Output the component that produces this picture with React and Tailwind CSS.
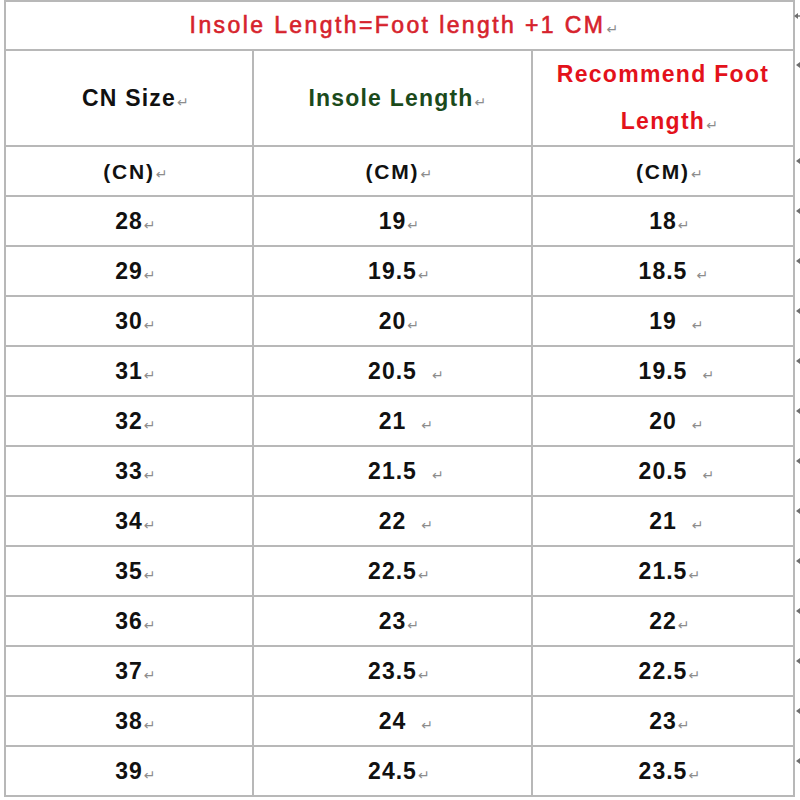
import React from "react";

const rows = [
  ["28", "", "19", "", "18", ""],
  ["29", "", "19.5", "", "18.5", " "],
  ["30", "", "20", "", "19", "  "],
  ["31", "", "20.5", "  ", "19.5", "  "],
  ["32", "", "21", "  ", "20", "  "],
  ["33", "", "21.5", "  ", "20.5", "  "],
  ["34", "", "22", "  ", "21", "  "],
  ["35", "", "22.5", "", "21.5", ""],
  ["36", "", "23", "", "22", ""],
  ["37", "", "23.5", "", "22.5", ""],
  ["38", "", "24", "  ", "23", ""],
  ["39", "", "24.5", "", "23.5", ""],
];

const gapClass = {
  "": "ml-[1px]",
  " ": "ml-[9px]",
  "  ": "ml-[15px]",
};

// word-style paragraph mark, not counted in centering
const Mark = ({ gap = "" }) => (
  <span
    className={`absolute left-full bottom-[1px] ${gapClass[gap]} text-[14px] leading-none font-normal tracking-normal text-[#8c8c8c] font-['DejaVu_Sans',sans-serif] [-webkit-text-stroke:0px]`}
  >
    ↵
  </span>
);

const RowMark = () => (
  <svg
    className="absolute -right-[7px] top-[10px]"
    width="6"
    height="8"
    viewBox="0 0 6 8"
  >
    <polygon points="0,4 4,1 4,7" fill="#6e6e6e" />
    <line x1="3" y1="4" x2="6" y2="4" stroke="#6e6e6e" strokeWidth="1.4" />
  </svg>
);

const Cell = ({ w, children }) => (
  <div
    className={`${w} h-full flex items-center justify-center border-r-2 border-[#b8b8b8]`}
  >
    {children}
  </div>
);

const Txt = ({ children, gap = "" }) => (
  <span className="relative inline-block leading-none">
    {children}
    <Mark gap={gap} />
  </span>
);

export default function App() {
  return (
    <div className="w-[800px] h-[800px] bg-white overflow-hidden font-['Liberation_Sans',Arial,sans-serif]">
      <div className="ml-[4px] w-[791px] border-t-2 border-l-2 border-[#b8b8b8]">
        {/* title */}
        <div className="relative h-[49px] flex items-center justify-center border-r-2 border-b-2 border-[#b8b8b8]">
          <span className="relative inline-block leading-none text-[23px] tracking-[2.4px] text-[#d6222c] [-webkit-text-stroke:0.6px_#d6222c] -ml-[4px]">
            Insole Length=Foot length +1 CM
            <Mark />
          </span>
          <RowMark />
        </div>

        {/* column headers */}
        <div className="relative h-[96px] flex border-b-2 border-[#b8b8b8] font-bold text-[23px] tracking-[1.2px]">
          <Cell w="w-[248px]">
            <span className="text-[#111]">
              <Txt>CN Size</Txt>
            </span>
          </Cell>
          <Cell w="w-[279px]">
            <span className="text-[#1b4a1b] -ml-[3px]">
              <Txt>Insole Length</Txt>
            </span>
          </Cell>
          <Cell w="w-[262px]">
            <div className="text-center leading-[47px] text-[#e3121b] tracking-[1.3px]">
              <div>Recommend Foot</div>
              <div>
                <Txt>Length</Txt>
              </div>
            </div>
          </Cell>
          <RowMark />
        </div>

        {/* units */}
        <div className="relative h-[50px] flex border-b-2 border-[#b8b8b8] font-bold text-[21px] tracking-[1.8px] text-[#111]">
          <Cell w="w-[248px]">
            <Txt>(CN)</Txt>
          </Cell>
          <Cell w="w-[279px]">
            <Txt>(CM)</Txt>
          </Cell>
          <Cell w="w-[262px]">
            <Txt>(CM)</Txt>
          </Cell>
          <RowMark />
        </div>

        {rows.map((r, i) => (
          <div
            key={i}
            className="relative h-[50px] flex border-b-2 border-[#b8b8b8] font-bold text-[23px] tracking-[1px] text-[#111]"
          >
            <Cell w="w-[248px]">
              <Txt gap={r[1]}>{r[0]}</Txt>
            </Cell>
            <Cell w="w-[279px]">
              <Txt gap={r[3]}>{r[2]}</Txt>
            </Cell>
            <Cell w="w-[262px]">
              <Txt gap={r[5]}>{r[4]}</Txt>
            </Cell>
            <RowMark />
          </div>
        ))}
      </div>
    </div>
  );
}
